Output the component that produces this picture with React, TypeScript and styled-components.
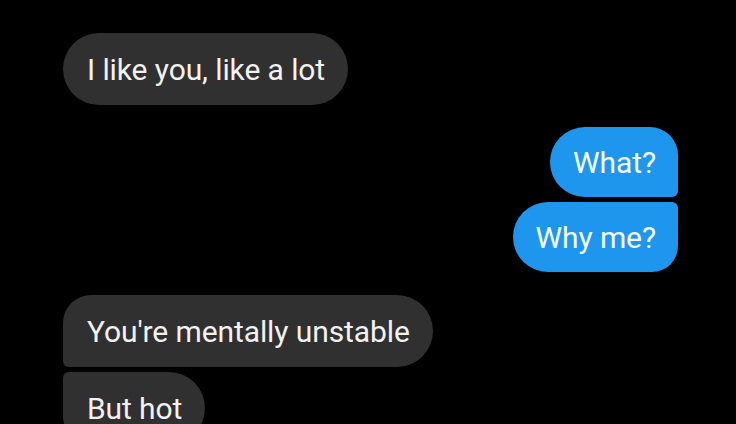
import React from "react";
import styled, { createGlobalStyle, css } from "styled-components";

const Global = createGlobalStyle`
  html, body {
    margin: 0;
    padding: 0;
    background: #000;
  }
  body {
    width: 736px;
    height: 424px;
    overflow: hidden;
  }
`;

const Chat = styled.div`
  display: flex;
  flex-direction: column;
  padding: 33px 58px 0 63px;
  font-family: Roboto, "Noto Sans", sans-serif;
`;

const Group = styled.div<{ $side: "in" | "out"; $top?: number }>`
  display: flex;
  flex-direction: column;
  gap: 5px;
  align-items: ${(p) => (p.$side === "out" ? "flex-end" : "flex-start")};
  margin-top: ${(p) => p.$top ?? 0}px;
`;

type Pos = "single" | "first" | "last";

const Bubble = styled.div<{ $side: "in" | "out"; $pos: Pos }>`
  box-sizing: border-box;
  display: flex;
  align-items: center;
  font-size: 30px;
  letter-spacing: -0.1px;
  color: #f2f2f2;
  white-space: nowrap;
  ${(p) =>
    p.$side === "in"
      ? css`
          height: 72px;
          padding: 0 23px 0 24px;
          background: #303030;
          border-radius: ${p.$pos === "single"
            ? "36px"
            : p.$pos === "first"
            ? "28px 36px 36px 6px"
            : "6px 36px 36px 28px"};
        `
      : css`
          height: 70px;
          padding: 0 22px 0 23px;
          background: #1f96ee;
          color: #f4fbff;
          border-radius: ${p.$pos === "first"
            ? "35px 28px 6px 35px"
            : "35px 6px 26px 35px"};
        `}
`;

export default function App() {
  return (
    <>
      <Global />
      <Chat>
        <Group $side="in">
          <Bubble $side="in" $pos="single">I like you, like a lot</Bubble>
        </Group>
        <Group $side="out" $top={22}>
          <Bubble $side="out" $pos="first">What?</Bubble>
          <Bubble $side="out" $pos="last">Why me?</Bubble>
        </Group>
        <Group $side="in" $top={23}>
          <Bubble $side="in" $pos="first">You're mentally unstable</Bubble>
          <Bubble $side="in" $pos="last">But hot</Bubble>
        </Group>
      </Chat>
    </>
  );
}
